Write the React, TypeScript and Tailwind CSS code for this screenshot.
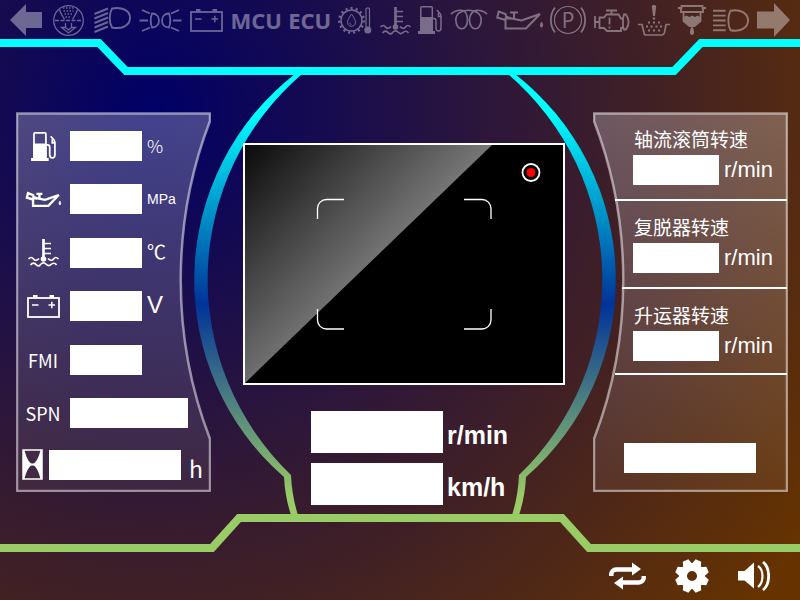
import type { ReactNode } from "react";

type GlyphProps = {
  label: string;
  box: string;
  className: string;
  stroke?: number;
  children: ReactNode;
};

function Glyph({ label, box, className, stroke = 1.5, children }: GlyphProps) {
  return (
    <svg
      role="img"
      aria-label={label}
      viewBox={box}
      className={`shrink-0 overflow-visible ${className}`}
      fill="none"
      stroke="currentColor"
      strokeWidth={stroke}
    >
      {children}
    </svg>
  );
}

type IconProps = { className: string; stroke?: number };

function FuelIcon({ className, stroke }: IconProps) {
  return (
    <Glyph label="Fuel" box="0 0 24 28" className={className} stroke={stroke}>
      <rect x="2.800" y="0.800" width="11.500" height="24" rx="1" />
      <path d="M2 11h13v14h2v3H0v-3h2z" fill="currentColor" stroke="none" />
      <path d="M14.500 12.500h1.500c1.500 0 2 1 2 2.500V22c0 4 5 4 5 0V10c0-2.500-2-3-4-6" />
      <path d="M20.500 7v3.500H23" />
    </Glyph>
  );
}

function CoolantIcon({ className, stroke = 1.7 }: IconProps) {
  return (
    <Glyph label="Coolant temperature" box="0 0 31 27" className={className} stroke={stroke}>
      <path d="M15.500 0v20" strokeWidth="2.700" />
      <circle cx="15.500" cy="20" r="2.800" fill="currentColor" stroke="none" />
      <path d="M16 4.500h7M16 9.500h7M16 14.500h7" />
      <path d="M.5 20c2-2 3.500-2 5 0s3.500 1.500 5.500-.5M20 19.500c2 2 4 2.500 5.500.5s3-2 5 0" />
      <path d="M2.500 26c2-2.500 4-2.500 6 0 2 1.500 3 1 4-.5 2-2 4-2 6 0 1.500 1.500 3 1.500 4.500 0s4-2 5.500.5" />
    </Glyph>
  );
}

function BatteryIcon({ className, stroke = 1.8 }: IconProps) {
  return (
    <Glyph label="Battery" box="0 0 33 23" className={className} stroke={stroke}>
      <rect x="1" y="3" width="31" height="19" />
      <path d="M6 0h4.500v3H6zM22.500 0H27v3h-4.500z" fill="currentColor" stroke="none" />
      <path d="M5 10h6.500M21.500 10H28M24.800 6.800v6.500" strokeWidth="1.500" />
    </Glyph>
  );
}

function OilIcon({ className, stroke = 2 }: IconProps) {
  return (
    <Glyph label="Oil pressure" box="0 0 47 20" className={className} stroke={stroke}>
      <path d="M9.500 8.500h6l10 2L44 4 30 18.500H9.500z" />
      <path d="M9.500 10L1.200 7.500l1.500-6L9.500 4l.5 2.500 5 2M14 2.500h8M18 2.500v6" />
      <path d="M45.500 12c1.500 3 1.500 5 0 5s-1.500-2 0-5z" fill="currentColor" strokeWidth="1" />
    </Glyph>
  );
}

const GEAR_TEETH = [0, 45, 90, 135, 180, 225, 270, 315];

function StatusBar() {
  return (
    <header className="flex h-10 items-center justify-between px-[10px] text-white opacity-[.38]">
      <Glyph label="Left turn" box="0 0 35 32" className="h-8 w-[35px]">
        <path d="M0 16L16 0v8h16v16H16v8z" fill="currentColor" stroke="none" />
      </Glyph>
      <Glyph label="Air filter" box="0 0 34 31" className="h-[31px] w-[34px]" stroke={1.300}>
        <circle cx="15.500" cy="15.500" r="14.800" />
        <path d="M2 15.500h27" strokeDasharray="4 1.500" strokeWidth="1.600" />
        <path d="M6.500 4.500c1 5 3.500 6.500 5 10M24.500 4.500c-1 5-3.500 6.500-5 10" />
        <path d="M10 3h11M10.500 6h10M11.500 9h8M12.500 12h6" strokeDasharray="1.500 1.500" />
        <path d="M12.500 18v4.500H8.500l7 5.500 7-5.500h-4V18M12.500 22.500l3 2.500 3-2.500" />
      </Glyph>
      <Glyph label="Low beam" box="0 0 37 26" className="h-[26px] w-[37px]" stroke={1.900}>
        <path d="M.5 7L14 1.500M.5 11.500L14 6M.5 16L14 10.500M.5 20.500L14 15M.5 25L14 19.500" />
        <path d="M18 1.500c10-2 18 2 18 9.500s-8 11.500-18 9.500c-3-5-3-14 0-19z" />
      </Glyph>
      <Glyph label="Position lights" box="0 0 43 23" className="h-[23px] w-[43px]" stroke={1.800}>
        <path d="M13 4.500c4.500 0 7 3 7 7s-2.500 7-7 7c-1.500-4-1.500-10 0-14zM30 4.500c-4.500 0-7 3-7 7s2.500 7 7 7c1.500-4 1.500-10 0-14z" />
        <path d="M.5 11.500H9M34 11.500h8.500M3 1l8 3.500M3 22l8-3.500M40 1l-8 3.500M40 22l-8-3.500" />
      </Glyph>
      <BatteryIcon className="h-[23px] w-[33px]" />
      <span className="w-[50px] font-['Open_Sans',sans-serif] text-[22px] leading-10 font-bold">MCU</span>
      <span className="w-[42px] font-['Open_Sans',sans-serif] text-[22px] leading-10 font-bold">ECU</span>
      <Glyph label="Transmission oil temperature" box="0 0 34 27" className="h-[27px] w-[34px]" stroke={1.500}>
        <circle cx="13.500" cy="13.500" r="10.500" />
        <circle cx="13.500" cy="13.500" r="12.200" strokeWidth="2.500" strokeDasharray="2 3.110" />
        <path d="M13.500 7c3 4.500 4 6.500 4 8.500 0 5-8 5-8 0 0-2 1-4 4-8.500zM12 15.500c0 1.500.5 2 1.500 2" strokeWidth="1" />
        <path d="M28 20V2c0-1.500 3.500-1.500 3.500 0v18" strokeWidth="1.200" />
        <circle cx="29.800" cy="23" r="3.500" fill="currentColor" stroke="none" />
      </Glyph>
      <CoolantIcon className="h-[27px] w-[31px]" />
      <FuelIcon className="h-7 w-6" />
      <Glyph label="Glow plug" box="0 0 39 22" className="h-[22px] w-[38px]" stroke={1.700}>
        <path d="M1 5C4 2 8 1 11 1c5 0 7 5 7 10 0 6-3 9-6 9s-6-3-6-9C6 5 11 1 19 1s13 4 13 10-3 9-6 9-6-3-6-9c0-5 3-10 8-10 3 0 7 1 10 4" />
      </Glyph>
      <OilIcon className="h-5 w-[47px]" />
      <Glyph label="Parking brake" box="0 0 36 28" className="h-7 w-9" stroke={1.400}>
        <circle cx="18" cy="14" r="13.500" strokeWidth="1.200" />
        <path d="M5 1.500c-5.500 7-5.500 18 0 25M31 1.500c5.500 7 5.500 18 0 25" strokeWidth="1.800" />
        <text x="18" y="21.500" textAnchor="middle" fill="currentColor" stroke="none" className="font-['Open_Sans',sans-serif] text-[21px] font-medium">
          P
        </text>
      </Glyph>
      <Glyph label="Engine" box="0 0 36 23" className="h-[23px] w-9" stroke={1.800}>
        <path d="M1 7v12M1 13h4.500M5.500 8.500h4.500l2.500-3h12l2.500 4h2v9.500h-2v3H13l-3-3H5.500zM12 1.500h11M17.500 1.500v4" />
        <path d="M29 9.500l1-4h2c3.500 5 3.500 10 0 15h-2l-1-3" />
        <path d="M15.500 8.500v7M15.500 17.500v2" />
      </Glyph>
      <Glyph label="Urea level" box="0 0 32 31" className="h-[31px] w-8" stroke={1.700}>
        <path d="M0 19.500h4l2 8c0 2 1 2.500 2 2.500h16c1.500 0 2-1 2.500-2.500l1.500-8h4" />
        <path d="M13.800 1.500c0-2 4.400-2 4.400 0L17 11h-2z" fill="currentColor" stroke="none" />
        <path d="M14.800 13.500h2.400M10 17.500h2M15 17.500h2M20 17.500h2M8 21.500h2M12.500 21.500h2M17.500 21.500h2M22 21.500h2M10 25.500h2M15 25.500h2M20 25.500h2" strokeWidth="2" />
      </Glyph>
      <Glyph label="Fuel filter" box="0 0 28 30" className="h-[30px] w-7" stroke={1.800}>
        <path d="M0 3h3.500V1h21v2H28M3 3v4h22V3M5.500 7v9l6 5h5l6-5V7" />
        <path d="M6 12l2.500-1.500 3 1.500 2.500-1.500 3 1.500 2.500-1.500L22 12v4l-6 5h-4l-6-5zM14 21c3 5 2.500 9 0 9s-3-4 0-9z" fill="currentColor" stroke="none" />
      </Glyph>
      <Glyph label="High beam" box="0 0 37 23" className="h-[23px] w-9" stroke={1.900}>
        <path d="M0 1.500h13M0 6.500h13M0 11.500h13M0 16.500h13M0 21.500h13" />
        <path d="M18 1.500c10-2 18 2.500 18 10s-8 12-18 10c-3-5-3-15 0-20z" />
      </Glyph>
      <Glyph label="Right turn" box="0 0 33 34" className="h-[34px] w-[33px]">
        <path d="M33 17L17 0v8.500H0v17h17V34z" fill="currentColor" stroke="none" />
      </Glyph>
    </header>
  );
}

function Frame() {
  const ring =
    "M295 74A261 261 0 0 0 284 477Q285 497 291 515L298 515Q292 497 291 475A271 271 0 0 1 302 74z";
  return (
    <svg
      aria-hidden="true"
      viewBox="0 0 800 600"
      preserveAspectRatio="none"
      className="pointer-events-none absolute inset-0 h-full w-full"
      fill="none"
    >
      <defs>
        <linearGradient id="ring" gradientUnits="userSpaceOnUse" x1="0" y1="75" x2="0" y2="515">
          <stop offset="0.080" stopColor="#00ffff" />
          <stop offset="0.520" stopColor="#003399" />
          <stop offset="0.960" stopColor="#99cc66" />
        </linearGradient>
      </defs>
      <path d={ring} fill="url(#ring)" />
      <path d={ring} fill="url(#ring)" transform="matrix(-1 0 0 1 810 0)" />
      <path d="M0 43H99L126 71H674L701 43H800" stroke="#00ffff" strokeWidth="8" />
      <path d="M0 548H212L239 518H562L589 548H800" stroke="#99cc66" strokeWidth="8" />
    </svg>
  );
}

function PanelShape({ id, d }: { id: string; d: string }) {
  return (
    <svg
      aria-hidden="true"
      viewBox="0 0 195 380"
      preserveAspectRatio="none"
      className="pointer-events-none absolute inset-0 h-full w-full"
    >
      <defs>
        <linearGradient id={id} x1="0" y1="0" x2="0" y2="1">
          <stop offset="0" stopColor="#fff" stopOpacity="0.260" />
          <stop offset="1" stopColor="#fff" stopOpacity="0.060" />
        </linearGradient>
      </defs>
      <path d={d} fill={`url(#${id})`} stroke="#fff" strokeOpacity="0.500" strokeWidth="2.500" />
    </svg>
  );
}

type ReadoutProps = { id: string; label?: string; className: string };

function Readout({ id, label, className }: ReadoutProps) {
  return <input id={id} type="text" readOnly aria-label={label} className={`shrink-0 bg-white text-center text-black outline-none ${className}`} />;
}

type GaugeRow = { id: string; mark: ReactNode; unit?: ReactNode; width: string };

const GAUGES: GaugeRow[] = [
  {
    id: "fuel",
    mark: <FuelIcon className="h-[29px] w-[25px]" stroke={1.700} />,
    unit: <span className="font-['Noto_Sans_CJK_SC',sans-serif] text-[18px] font-light">%</span>,
    width: "w-[72px]",
  },
  {
    id: "oil",
    mark: <OilIcon className="h-[15px] w-[35px]" stroke={3.200} />,
    unit: <span className="text-[14px]">MPa</span>,
    width: "w-[72px]",
  },
  {
    id: "coolant",
    mark: <CoolantIcon className="h-[27px] w-[31px]" />,
    unit: <span className="font-['Noto_Sans_CJK_SC',sans-serif] text-[19px]">℃</span>,
    width: "w-[72px]",
  },
  {
    id: "voltage",
    mark: <BatteryIcon className="h-[23px] w-[33px]" />,
    unit: <span className="text-[24px]">V</span>,
    width: "w-[72px]",
  },
  { id: "fmi", mark: "FMI", width: "w-[72px]" },
  { id: "spn", mark: "SPN", width: "w-[118px]" },
];

function EnginePanel() {
  return (
    <section className="relative h-[380px] w-[195px] shrink-0 pt-[19px] pl-1">
      <PanelShape id="left-fill" d="M1 1.500H194V9C155 110 155 226 194 327V379H1z" />
      <div className="relative flex h-[297px] flex-col justify-between">
        {GAUGES.map((row) => (
          <div key={row.id} className="flex h-[30px] items-center">
            <label
              htmlFor={row.id}
              className="mr-1 flex w-[46px] shrink-0 justify-center font-['Noto_Sans_CJK_SC',sans-serif] text-[18px] leading-[30px]"
            >
              {row.mark}
            </label>
            <Readout id={row.id} className={`h-[30px] ${row.width}`} />
            <span className="ml-[5px] leading-[30px]">{row.unit}</span>
          </div>
        ))}
      </div>
      <div className="relative mt-[21px] flex h-[31px] items-center pl-0.5">
        <label htmlFor="hours" className="mr-[6px]">
          <Glyph label="Working hours" box="0 0 21 31" className="h-[31px] w-[21px]" stroke={1.500}>
            <rect x="1" y="1" width="19" height="29" />
            <path
              d="M1 1h1.500C4 8 6.500 13 10.500 15.500 6.500 18 4 23 2.500 30H1zM20 1h-1.500c-1.500 7-4 12-8 14.500 4 2.500 6.500 7.500 8 14.500H20z"
              fill="currentColor"
              stroke="none"
            />
            <path d="M8.500 15.500h4" strokeWidth="2" />
          </Glyph>
        </label>
        <Readout id="hours" className="h-[30px] w-[132px]" />
        <span className="ml-2 pt-1.5 font-['Noto_Sans_CJK_SC',sans-serif] text-[23px] leading-[30px]">h</span>
      </div>
    </section>
  );
}

function Camera() {
  return (
    <div className="h-[242px] border-2 border-white bg-black">
      <svg role="img" aria-label="Camera view" viewBox="0 0 318 238" className="h-full w-full" fill="none">
        <defs>
          <linearGradient id="glare" gradientUnits="userSpaceOnUse" x1="0" y1="0" x2="135" y2="130">
            <stop offset="0" stopColor="#0a0a0a" />
            <stop offset="1" stopColor="#7c7c7c" />
          </linearGradient>
        </defs>
        <path d="M0 0H247L0 238z" fill="url(#glare)" />
        <path
          d="M72.500 74V63.500a9 9 0 0 1 9-9H99M219 54.500h18a9 9 0 0 1 9 9V74M246 164v11a9 9 0 0 1-9 9h-18M99 184H81.500a9 9 0 0 1-9-9V164"
          stroke="#fff"
          strokeWidth="1.300"
        />
        <circle cx="286" cy="27.500" r="8.500" stroke="#fff" strokeWidth="1.800" />
        <circle cx="286" cy="27.500" r="4.500" fill="#ff0000" />
      </svg>
    </div>
  );
}

function CenterPanel() {
  const speeds = [
    { id: "engine-speed", name: "Engine speed", unit: "r/min" },
    { id: "ground-speed", name: "Ground speed", unit: "km/h" },
  ];
  return (
    <section className="flex flex-1 justify-center pt-[31px] pl-1">
      <div className="w-[322px] shrink-0">
        <Camera />
        <div className="mt-[26px] ml-[68px] flex flex-col gap-[10px]">
          {speeds.map((s) => (
            <div key={s.id} className="flex items-end gap-1">
              <Readout id={s.id} label={s.name} className="h-[42px] w-[132px]" />
              <span className="text-[25px] leading-9 font-bold">{s.unit}</span>
            </div>
          ))}
        </div>
      </div>
    </section>
  );
}

const SHAFTS = [
  { id: "axial", name: "轴流滚筒转速", shape: "ml-[22px] h-[88px] pl-[18px]" },
  { id: "rethresh", name: "复脱器转速", shape: "ml-[29px] h-[88px] pl-[11px]" },
  { id: "elevator", name: "升运器转速", shape: "ml-[22px] h-[86px] pl-[18px]" },
];

function ShaftPanel() {
  return (
    <section className="relative h-[380px] w-[195px] shrink-0 pt-px">
      <PanelShape id="right-fill" d="M194 1.500H1V9C40 110 40 226 1 327V379H194z" />
      <div className="relative">
        {SHAFTS.map((s) => (
          <div key={s.id} className={`mr-px border-b-2 border-white pt-[14px] ${s.shape}`}>
            <label htmlFor={s.id} className="ml-px block font-['Noto_Sans_CJK_SC',sans-serif] text-[19px] leading-6 whitespace-nowrap">
              {s.name}
            </label>
            <div className="mt-1 flex items-center gap-[5px]">
              <Readout id={s.id} className="h-[30px] w-[86px]" />
              <span className="text-[22px] leading-[30px]">r/min</span>
            </div>
          </div>
        ))}
        <div className="mt-[68px] ml-[31px] flex">
          <Readout id="status" label="Status" className="h-[30px] w-[132px]" />
        </div>
      </div>
    </section>
  );
}

function Controls() {
  return (
    <footer className="relative mt-auto flex h-12 items-center justify-end gap-[29px] pr-[30px]">
      <button type="button" aria-label="Switch page">
        <svg viewBox="0 0 37 28" className="h-7 w-[37px]" fill="none" stroke="currentColor" strokeWidth="4.500">
          <path d="M2.200 14v-1c0-3 2-5.500 5-5.500h17M34.800 14v1c0 3-2 5.500-5 5.500h-17" />
          <path d="M23 .5l9 6.500-9 6.500zM14 14.500L5 21l9 6.500z" fill="currentColor" stroke="none" />
        </svg>
      </button>
      <button type="button" aria-label="Settings">
        <svg viewBox="-17 -17 34 34" className="size-[34px]" fill="none">
          <circle r="9" stroke="currentColor" strokeWidth="8" />
          {GEAR_TEETH.map((angle) => (
            <path key={angle} d="M-5-11L-3-16.800H3L5-11z" fill="currentColor" transform={`rotate(${angle + 22.5})`} />
          ))}
        </svg>
      </button>
      <button type="button" aria-label="Volume">
        <svg viewBox="0 0 32 30" className="h-[30px] w-8" fill="none" stroke="currentColor" strokeWidth="2.200">
          <path d="M0 10h6.500L16 1.500v26L6.500 19.500H0z" fill="currentColor" stroke="none" />
          <path d="M20 5c6 4 6 16 0 21" />
          <path d="M25 1c7.500 6 7.500 22 0 28" strokeWidth="2.800" />
        </svg>
      </button>
    </footer>
  );
}

export default function App() {
  return (
    <div className="relative flex min-h-screen flex-col overflow-hidden bg-[radial-gradient(circle_at_19%_18%,#000066_0%,#663300_96%)] font-['Liberation_Sans',sans-serif] text-white">
      <Frame />
      <StatusBar />
      <main className="relative flex items-start justify-between pt-[72px] pr-3 pl-4">
        <EnginePanel />
        <CenterPanel />
        <ShaftPanel />
      </main>
      <Controls />
    </div>
  );
}
